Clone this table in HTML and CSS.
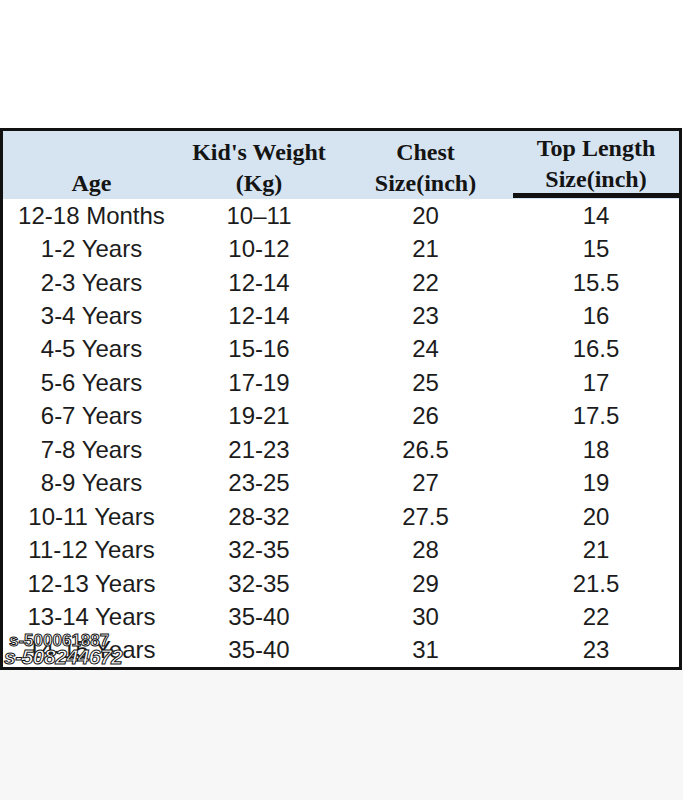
FILE: index.html
```html
<!DOCTYPE html>
<html>
<head>
<meta charset="utf-8">
<link rel="stylesheet" href="styles.css">
</head>
<body>
<div class="page">
  <div class="top-space"></div>
  <div class="chart">
    <div class="head">
      <div class="hcell"><span>&nbsp;</span><span>Age</span></div>
      <div class="hcell"><span>Kid's Weight</span><span>(Kg)</span></div>
      <div class="hcell"><span>Chest</span><span>Size(inch)</span></div>
      <div class="hcell last"><span>Top Length</span><span>Size(inch)</span></div>
    </div>
    <div class="rows">
      <div>12-18 Months</div><div>10–11</div><div>20</div><div>14</div>
      <div>1-2 Years</div><div>10-12</div><div>21</div><div>15</div>
      <div>2-3 Years</div><div>12-14</div><div>22</div><div>15.5</div>
      <div>3-4 Years</div><div>12-14</div><div>23</div><div>16</div>
      <div>4-5 Years</div><div>15-16</div><div>24</div><div>16.5</div>
      <div>5-6 Years</div><div>17-19</div><div>25</div><div>17</div>
      <div>6-7 Years</div><div>19-21</div><div>26</div><div>17.5</div>
      <div>7-8 Years</div><div>21-23</div><div>26.5</div><div>18</div>
      <div>8-9 Years</div><div>23-25</div><div>27</div><div>19</div>
      <div>10-11 Years</div><div>28-32</div><div>27.5</div><div>20</div>
      <div>11-12 Years</div><div>32-35</div><div>28</div><div>21</div>
      <div>12-13 Years</div><div>32-35</div><div>29</div><div>21.5</div>
      <div>13-14 Years</div><div>35-40</div><div>30</div><div>22</div>
      <div>14-15 Years</div><div>35-40</div><div>31</div><div>23</div>
    </div>
    <div class="wm wm1">s-500061887</div>
    <div class="wm wm2">s-508244672</div>
  </div>
  <div class="bottom-space"></div>
</div>
</body>
</html>
```
FILE: styles.css
```css
html, body {
  margin: 0;
  padding: 0;
  background: #ffffff;
}
.page {
  width: 683px;
  height: 800px;
  display: flex;
  flex-direction: column;
  background: #ffffff;
}
.top-space {
  height: 128px;
  background: #ffffff;
}
.chart {
  position: relative;
  width: 676px;
  border: 3px solid #111;
  background: #ffffff;
}
.head {
  display: grid;
  grid-template-columns: 177px 158px 175px 1fr;
  background: #d6e4f2;
  height: 68px;
  font-family: "Liberation Serif", "Times New Roman", serif;
  font-weight: bold;
  font-size: 24px;
  color: #141414;
}
.hcell {
  display: flex;
  flex-direction: column;
  justify-content: flex-end;
  align-items: center;
  line-height: 31px;
}
.hcell.last {
  border-bottom: 5px solid #111;
  line-height: 31px;
  padding-bottom: 0;
  margin-bottom: 1px;
}
.hcell.last span {
  position: relative;
  top: 2px;
}
.rows {
  display: grid;
  grid-template-columns: 177px 158px 175px 1fr;
  grid-auto-rows: 33.45px;
  font-family: "Liberation Sans", Arial, sans-serif;
  font-size: 24px;
  color: #1c1c1c;
}
.rows > div {
  display: flex;
  align-items: center;
  justify-content: center;
}
.wm {
  position: absolute;
  font-family: "Liberation Sans", Arial, sans-serif;
  white-space: nowrap;
  color: #ffffff;
  -webkit-text-stroke: 1px #111;
  font-weight: bold;
}
.wm1 {
  left: 6px;
  bottom: 16px;
  font-size: 17px;
}
.wm2 {
  left: 1px;
  bottom: -2px;
  font-size: 21px;
  font-style: italic;
  letter-spacing: -0.5px;
}
.bottom-space {
  flex: 1;
  background: #f7f7f7;
}
```
